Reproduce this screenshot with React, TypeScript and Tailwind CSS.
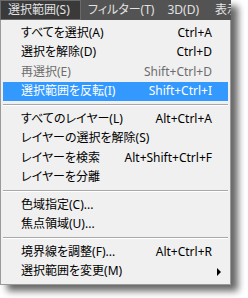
import React from "react";

type Item =
  | { type: "item"; label: string; shortcut?: string; disabled?: boolean; active?: boolean; sub?: boolean }
  | { type: "sep" };

const items: Item[] = [
  { type: "item", label: "すべてを選択(A)", shortcut: "Ctrl+A" },
  { type: "item", label: "選択を解除(D)", shortcut: "Ctrl+D" },
  { type: "item", label: "再選択(E)", shortcut: "Shift+Ctrl+D", disabled: true },
  { type: "item", label: "選択範囲を反転(I)", shortcut: "Shift+Ctrl+I", active: true },
  { type: "sep" },
  { type: "item", label: "すべてのレイヤー(L)", shortcut: "Alt+Ctrl+A" },
  { type: "item", label: "レイヤーの選択を解除(S)" },
  { type: "item", label: "レイヤーを検索", shortcut: "Alt+Shift+Ctrl+F" },
  { type: "item", label: "レイヤーを分離" },
  { type: "sep" },
  { type: "item", label: "色域指定(C)..." },
  { type: "item", label: "焦点領域(U)..." },
  { type: "sep" },
  { type: "item", label: "境界線を調整(F)...", shortcut: "Alt+Ctrl+R" },
  { type: "item", label: "選択範囲を変更(M)", sub: true },
];

const font = "[font-family:'Noto_Sans','Noto_Sans_CJK_JP',sans-serif] [font-feature-settings:'palt']";

export default function App() {
  return (
    <div className={`w-[248px] h-[298px] bg-white overflow-hidden ${font}`}>
      <div className="w-[231px] shadow-[7px_6px_7px_rgba(0,0,0,0.6)]">
        <div className="h-[20px] bg-[#535353] flex items-center text-[12px] text-[#e2e2e2] whitespace-nowrap overflow-hidden">
          <div className="h-[20px] w-[81px] shrink-0 bg-[#3a3a3a] border border-[#6a6a6a] flex items-center pl-[7px]">
            選択範囲(S)
          </div>
          <div className="ml-[7px] shrink-0">フィルター(T)</div>
          <div className="ml-[13px] shrink-0">3D(D)</div>
          <div className="ml-[16px] shrink-0">表示</div>
        </div>
        <div className="bg-[#f0f0f0] border-l border-r border-b border-[#9a9a9a] pt-[3px] pb-[3px] text-[12px]">
          {items.map((it, i) =>
            it.type === "sep" ? (
              <div key={i} className="h-[8px] flex items-center px-[2px]">
                <div className="w-full h-[2px] border-t border-[#a8a8a8] border-b border-b-white" />
              </div>
            ) : (
              <div
                key={i}
                className={`h-[19.5px] mx-[2px] flex items-center pl-[18px] pr-[16px] relative ${
                  it.active ? "bg-[#3399ff] text-white" : it.disabled ? "text-[#6d6d6d]" : "text-black"
                }`}
              >
                <span className="flex-1 whitespace-nowrap">{it.label}</span>
                {it.shortcut && <span className="whitespace-nowrap">{it.shortcut}</span>}
                {it.sub && (
                  <svg className="absolute right-[7px] top-[6px]" width="4" height="8" viewBox="0 0 4 8">
                    <path d="M0 0 L4 4 L0 8 Z" fill="#000" />
                  </svg>
                )}
              </div>
            )
          )}
        </div>
      </div>
    </div>
  );
}
